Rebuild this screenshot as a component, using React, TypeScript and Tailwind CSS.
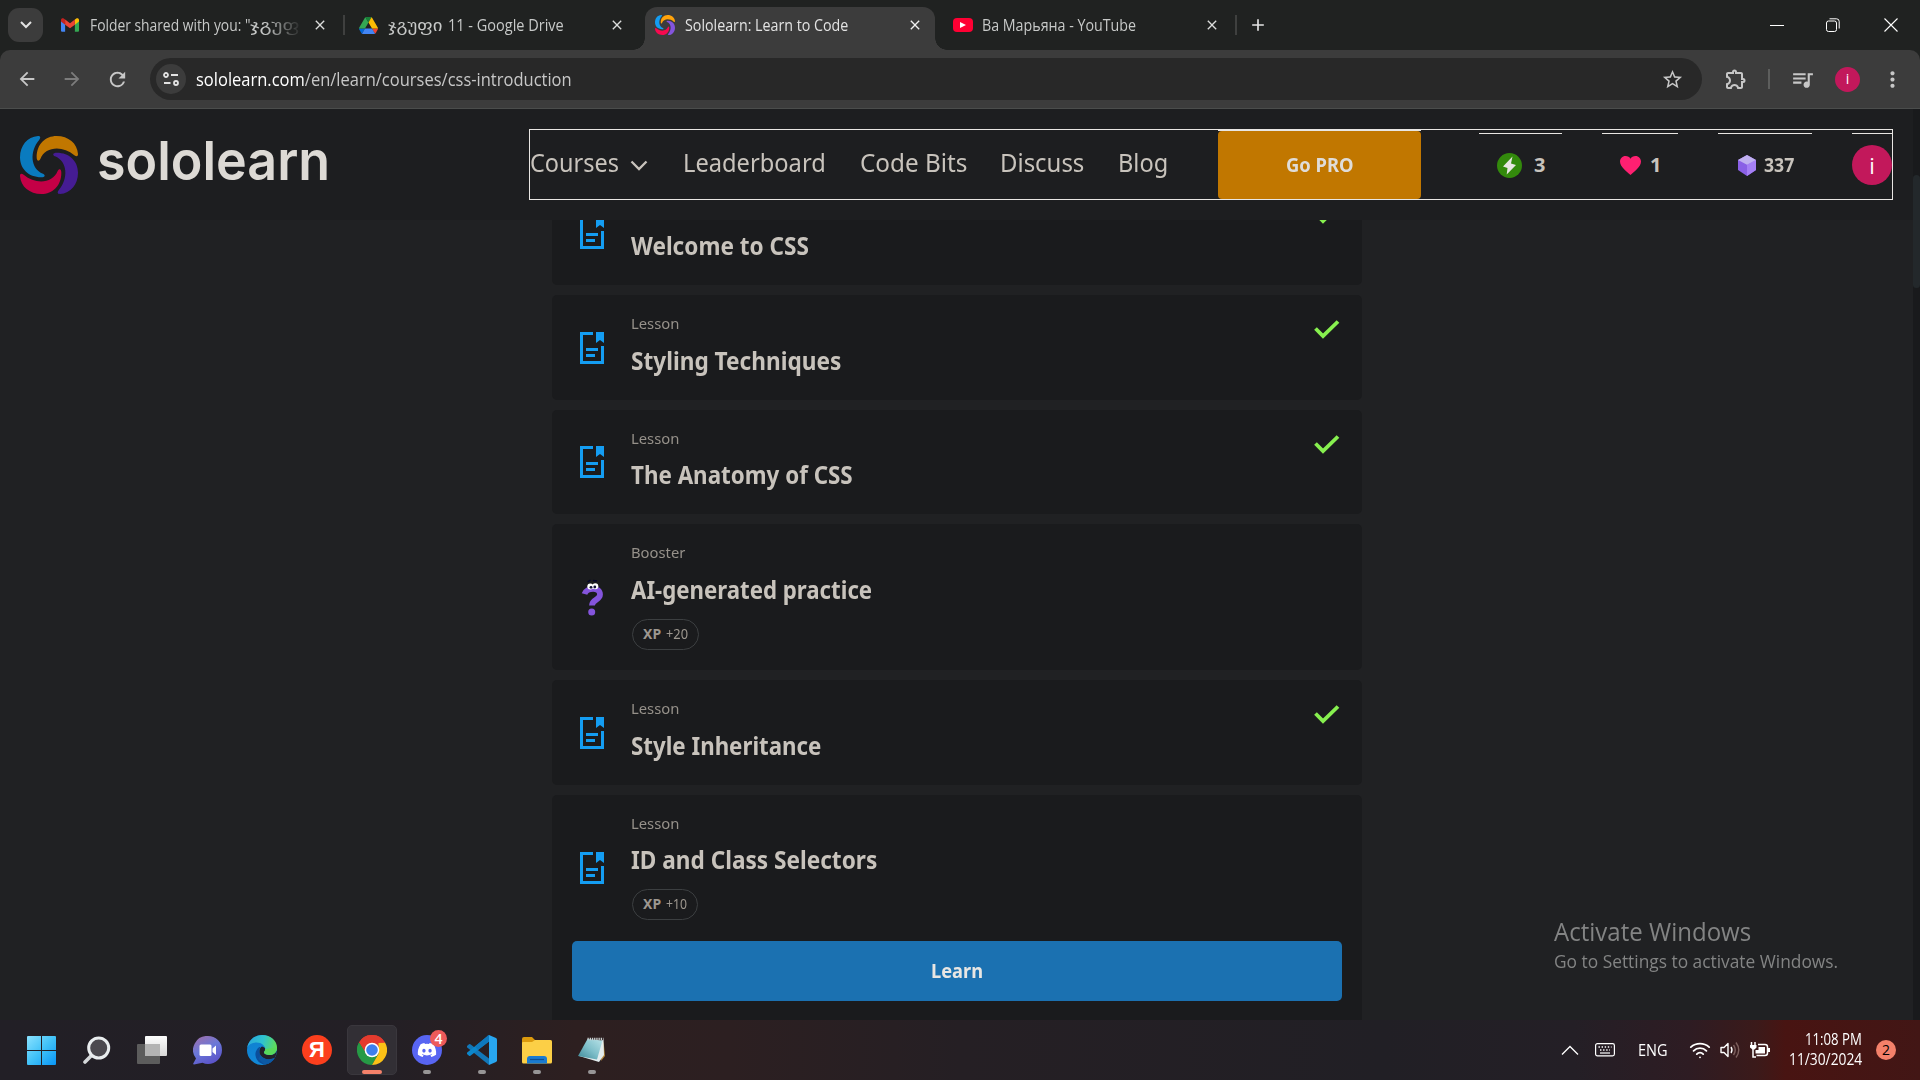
import { useLayoutEffect, useRef, useState, type ReactNode } from "react";
import {
  MdArrowBack, MdArrowForward, MdRefresh, MdStarOutline, MdOutlineExtension,
  MdQueueMusic, MdMoreVert, MdClose, MdAdd,
} from "react-icons/md";
import { FaDiscord } from "react-icons/fa";
import { Wifi } from "lucide-react";

const UI = "font-['Open_Sans','DejaVu_Sans',sans-serif]";
const FIRA = "font-['Noto_Sans','DejaVu_Sans',sans-serif]";

/** A single line of text condensed or widened to an exact width. */
function T({ w, className = "", children }: { w: number; className?: string; children: ReactNode }) {
  const ref = useRef<HTMLSpanElement>(null);
  const [k, setK] = useState(1);
  useLayoutEffect(() => {
    if (ref.current && ref.current.offsetWidth) {
      setK(w / ref.current.offsetWidth);
    }
  }, [w]);
  return (
    <span className={`block shrink-0 ${className}`} style={{ width: w }}>
      <span ref={ref} className="inline-block origin-left whitespace-nowrap align-top" style={{ transform: `scaleX(${k})` }}>
        {children}
      </span>
    </span>
  );
}

function SoloMark({ className, colors }: { className: string; colors: string[] }) {
  const d = "M110 0C76 0 50 25 50 64C50 76 57 77 61 69C76 31 128 28 163 58C170 63 174 61 174 54C172 22 145 0 110 0Z";
  return (
    <svg viewBox="0 0 174 174" className={className}>
      {colors.map((c, i) => (
        <path key={c} d={d} fill={c} transform={`rotate(${i * 90} 87 87)`} />
      ))}
    </svg>
  );
}

function TabStrip() {
  return (
    <div className={`flex h-[50px] bg-[#202221] text-[16px] leading-[20px] text-[#c7c9c8] ${UI}`}>
      <div className="ml-[8px] mt-[8px] flex h-[34px] w-[35px] items-center justify-center rounded-[11px] bg-[#3c3c3c]">
        <svg viewBox="0 0 12 8" className="h-[8px] w-[12px]"><path d="M1 1l5 5 5-5" fill="none" stroke="#e3e3e3" strokeWidth="2" /></svg>
      </div>
      <div className="ml-[18px] flex h-[50px] w-[284px] items-center">
        <svg viewBox="0 0 24 18" className="h-[14px] w-[18px] shrink-0">
          <path d="M0 3v13.500q0 1.500 1.500 1.500H5.500V8z" fill="#4285f4" />
          <path d="M24 3v13.500q0 1.500-1.500 1.500H18.500V8z" fill="#34a853" />
          <path d="M18.500 1.600V8.500L24 4.200V2.200C24 0 21.600-.8 20 .5z" fill="#fbbc04" />
          <path d="M5.500 1.600V8.500L0 4.200V2.200C0 0 2.400-.8 4 .5z" fill="#c5221f" />
          <path d="M5.500 8.500V1.600L12 6.500l6.500-4.900v6.900L12 13.300z" fill="#ea4335" />
        </svg>
        <div className="ml-[11px] flex w-[210px] overflow-hidden [mask-image:linear-gradient(to_right,#000_175px,transparent_212px)]">
          <T w={160}>Folder shared with you: "</T>
          <T w={60}>ჯგუფი</T>
        </div>
        <MdClose className="ml-[13px] size-[16px] shrink-0 text-[#dcdddc]" />
        <div className="ml-[15px] h-[20px] w-[2px] shrink-0 bg-[#3f403f]" />
      </div>
      <div className="ml-[14px] flex h-[50px] w-[286px] items-center">
        <svg viewBox="0 0 87.300 78" className="h-[17px] w-[19px] shrink-0">
          <path d="M6.600 66.850l3.850 6.650c.8 1.400 1.950 2.500 3.300 3.300L27.500 53H0c0 1.550.4 3.100 1.200 4.500z" fill="#0066da" />
          <path d="M43.650 25L29.900 1.200c-1.350.8-2.500 1.900-3.300 3.300l-25.400 44A9 9 0 000 53h27.500z" fill="#34a853" />
          <path d="M73.550 76.800c1.350-.8 2.500-1.900 3.300-3.300l1.600-2.750L86.100 57.500c.8-1.400 1.200-2.950 1.200-4.500H59.800l5.850 11.500z" fill="#ea4335" />
          <path d="M43.650 25L57.400 1.200C56.050.4 54.500 0 52.900 0H34.400c-1.600 0-3.150.45-4.500 1.200z" fill="#188038" />
          <path d="M59.800 53H27.500L13.750 76.800c1.350.8 2.900 1.200 4.500 1.200h50.800c1.600 0 3.150-.45 4.500-1.200z" fill="#4285f4" />
          <path d="M73.400 26.500l-12.700-22c-.8-1.400-1.950-2.500-3.300-3.300L43.650 25 59.800 53h27.450c0-1.550-.4-3.100-1.200-4.500z" fill="#fbbc04" />
        </svg>
        <T w={54} className="ml-[10px]">ჯგუფი</T>
        <T w={116} className="ml-[6px]">11 - Google Drive</T>
        <MdClose className="ml-[45px] size-[16px] shrink-0 text-[#dcdddc]" />
      </div>
      <div className="relative mt-[7px] flex h-[43px] w-[290px] items-center rounded-t-[12px] bg-[#3c3c3c] pb-[7px] pl-[10px] text-[#e3e3e3]">
        <div className="absolute bottom-0 left-[-12px] size-[12px] bg-[radial-gradient(circle_at_0_0,transparent_11.500px,#3c3c3c_12px)]" />
        <div className="absolute bottom-0 right-[-12px] size-[12px] bg-[radial-gradient(circle_at_100%_0,transparent_11.500px,#3c3c3c_12px)]" />
        <SoloMark className="size-[20px] shrink-0" colors={["#ffa30b", "#8454dc", "#f7094f", "#149df2"]} />
        <T w={163} className="ml-[10px]">Sololearn: Learn to Code</T>
        <MdClose className="ml-[59px] size-[16px] shrink-0 text-[#f0f0f0]" />
      </div>
      <div className="flex h-[50px] items-center">
        <div className="ml-[18px] flex h-[14px] w-[20px] items-center justify-center rounded-[4px] bg-[#ff0033]">
          <svg viewBox="0 0 6 6" className="size-[6px]"><path d="M0 0l6 3-6 3z" fill="#fff" /></svg>
        </div>
        <T w={154} className="ml-[9px]">Ва Марьяна - YouTube</T>
        <MdClose className="ml-[68px] size-[16px] shrink-0 text-[#dcdddc]" />
        <div className="ml-[15px] h-[20px] w-[2px] bg-[#3f403f]" />
        <MdAdd className="ml-[11px] size-[20px] text-[#e3e3e3]" />
      </div>
      <div className="ml-auto mr-[22px] flex h-[50px] items-center">
        <svg viewBox="0 0 14 14" className="size-[14px]"><path d="M0 7.500h14" stroke="#fff" /></svg>
        <svg viewBox="0 0 14 14" className="ml-[42px] size-[14px]">
          <rect x=".5" y="3" width="10" height="10.500" rx="2" fill="none" stroke="#fff" />
          <path d="M3.500 .8h7q2.700 0 2.700 2.700v7" fill="none" stroke="#fff" />
        </svg>
        <svg viewBox="0 0 14 14" className="ml-[44px] size-[14px]"><path d="M.5.5l13 13M13.500.5l-13 13" stroke="#fff" strokeWidth="1.100" /></svg>
      </div>
    </div>
  );
}

function Toolbar() {
  return (
    <div className={`bg-[#202221] ${UI}`}>
      <div className="flex h-[59px] items-center rounded-t-[10px] border-b border-[#4b4d4c] bg-[#3c3c3c] text-[#c7c7c7]">
        <MdArrowBack className="ml-[16px] size-[22px]" />
        <MdArrowForward className="ml-[23px] size-[22px] text-[#7c7c7c]" />
        <MdRefresh className="ml-[23px] size-[23px]" />
        <div className="ml-[21px] flex h-[42px] w-[1552px] items-center rounded-full bg-[#282828]">
          <div className="ml-[6px] flex size-[30px] items-center justify-center rounded-full bg-[#3c3c3c]">
            <svg viewBox="0 0 16 14" className="h-[14px] w-[16px]" fill="none" stroke="#e3e3e3" strokeWidth="1.800">
              <circle cx="3" cy="3" r="2" /><path d="M8 3h7M1 11h6.500" /><circle cx="13" cy="11" r="2" />
            </svg>
          </div>
          <T w={376} className="ml-[10px] text-[18px] leading-[24px] text-[#c7c7c7]">
            <span className="text-white">sololearn.com</span>/en/learn/courses/css-introduction
          </T>
          <MdStarOutline className="ml-auto mr-[18px] size-[23px]" />
        </div>
        <MdOutlineExtension className="ml-[22px] size-[24px]" />
        <div className="ml-[20px] h-[20px] w-[2px] bg-[#5d5e5d]" />
        <MdQueueMusic className="ml-[20px] size-[25px]" />
        <div className="ml-[20px] flex size-[25px] items-center justify-center rounded-full bg-[#c2185b] text-[14px] leading-none text-white">i</div>
        <MdMoreVert className="ml-[20px] size-[25px]" />
      </div>
    </div>
  );
}

function Header() {
  return (
    <div className={`flex h-[111px] bg-[#1d1e20] ${FIRA}`}>
      <SoloMark className="ml-[20px] mt-[27px] size-[58px] shrink-0" colors={["#c17700", "#451c93", "#c40046", "#0a7bbf"]} />
      <T w={233} className="ml-[19px] mt-[18px] font-['Inter',sans-serif] text-[54px] font-semibold leading-[68px] text-[#dddad5]">sololearn</T>
      <div className="ml-[199px] mt-[20px] flex h-[71px] w-[1364px] border border-[#e8e6e3] text-[24.500px] leading-[30px] text-[#c8c3bc]">
        <T w={89} className="mt-[18px]">Courses</T>
        <svg viewBox="0 0 18 11" className="ml-[11px] mt-[30px] h-[11px] w-[18px]"><path d="M1.500 1.500l7.500 7.500 7.500-7.500" fill="none" stroke="#c8c3bc" strokeWidth="2.300" /></svg>
        <T w={143} className="ml-[35px] mt-[18px]">Leaderboard</T>
        <T w={107} className="ml-[34px] mt-[18px]">Code Bits</T>
        <T w={84} className="ml-[33px] mt-[18px]">Discuss</T>
        <T w={50} className="ml-[34px] mt-[18px]">Blog</T>
        <div className="ml-[50px] h-[69px] w-[203px] border-t border-[#e8e6e3]">
          <div className="flex h-[68px] justify-center rounded-[4px] bg-[#c17700] pt-[20px] text-[20px] font-bold leading-[28px] text-[#dfdcd8]">
            <T w={68}>Go PRO</T>
          </div>
        </div>
        <div className="ml-[58px] mt-[3px] flex h-[63px] w-[83px] items-center border-t border-[#e8e6e3] pl-[18px] text-[20px] font-bold">
          <svg viewBox="0 0 25 25" className="size-[25px]"><circle cx="12.500" cy="12.500" r="12.500" fill="#338a0c" /><path d="M15.500 3.500L6 13.500l4.500 1.500-.8 6.500 9.300-9.500-5-1.500z" fill="#e8e6e3" /></svg>
          <T w={11} className="ml-[12px]">3</T>
        </div>
        <div className="ml-[40px] mt-[3px] flex h-[63px] w-[76px] items-center border-t border-[#e8e6e3] pl-[18px] text-[20px] font-bold">
          <svg viewBox="0 0 21 19" className="h-[19px] w-[21px]"><path d="M10.500 19C7 15.500 0 11 0 5.500C0 2.500 2.300 0 5.500 0C7.800 0 9.500 1 10.500 2.700C11.500 1 13.200 0 15.500 0C18.700 0 21 2.500 21 5.500C21 11 14 15.500 10.500 19Z" fill="#ff2071" /></svg>
          <T w={11} className="ml-[9px]">1</T>
        </div>
        <div className="ml-[40px] mt-[3px] flex h-[63px] w-[94px] items-center border-t border-[#e8e6e3] pl-[20px] text-[20px] font-bold">
          <svg viewBox="0 0 18 21" className="h-[21px] w-[18px]"><path d="M9 0l9 5v10l-9 6-9-6V5z" fill="#8a60e6" /><path d="M9 9.800L18 5v10l-9 6z" fill="#a57ff5" /><path d="M9 0l9 5-9 4.800L0 5z" fill="#c0b0f0" /></svg>
          <T w={30} className="ml-[8px]">337</T>
        </div>
        <div className="ml-auto mt-[3px] flex h-[63px] w-[40px] items-center border-t border-[#e8e6e3]">
          <div className={`flex size-[40px] items-center justify-center rounded-full bg-[#c2185b] text-[22px] leading-none text-white ${UI}`}>i</div>
        </div>
      </div>
    </div>
  );
}

function LessonIcon() {
  return (
    <svg viewBox="0 0 24 32" className="h-[32px] w-[24px]" fill="#149df2">
      <path d="M0 0h13v3H3v26h18V14h3v18H0z" />
      <path d="M16 0h8v11l-4-3-4 3z" />
      <path d="M6 16h12v3H6zM6 22h9v3H6z" />
    </svg>
  );
}

function BoosterIcon() {
  return (
    <svg viewBox="0 0 24 37" className="h-[37px] w-[24px]">
      <path d="M4.500 15C6.500 8.500 20 7.500 20 15.500C20 21 12 20.500 12 26.500" fill="none" stroke="#8454dc" strokeWidth="5.800" />
      <circle cx="11.700" cy="33" r="3.500" fill="#8454dc" />
      <path d="M7.500 3l3-2M13 1.500l4 .5" stroke="#05052a" strokeWidth="1.500" />
      <circle cx="10.300" cy="7.500" r="3" fill="#fff" /><circle cx="15.300" cy="7.300" r="3" fill="#fff" />
      <circle cx="11" cy="8.300" r="1.400" fill="#111133" /><circle cx="14.800" cy="8" r="1.400" fill="#111133" />
    </svg>
  );
}

type CardProps = {
  kind?: string; kindW?: number; kindClass?: string; title: string; w: number; done?: boolean; xp?: string; xpW?: number;
  size: string; iconPad: string; lead: string; learn?: boolean;
};

const CARDS: CardProps[] = [
  { title: "Welcome to CSS", kindClass: "invisible", w: 178, done: true, size: "h-[105px]", iconPad: "pt-[37px]", lead: "mt-[12px]" },
  { title: "Styling Techniques", w: 210, done: true, size: "h-[105px]", iconPad: "pt-[37px]", lead: "mt-[12px]" },
  { title: "The Anatomy of CSS", w: 222, done: true, size: "h-[104px]", iconPad: "pt-[36px]", lead: "mt-[11px]" },
  { kind: "Booster", kindW: 54, title: "AI-generated practice", w: 241, xp: "+20", xpW: 22, size: "h-[146px]", iconPad: "pt-[55px]", lead: "mt-[12px]" },
  { title: "Style Inheritance", w: 190, done: true, size: "h-[105px]", iconPad: "pt-[37px]", lead: "mt-[12px]" },
  { title: "ID and Class Selectors", w: 246, xp: "+10", xpW: 21, size: "h-[240px]", iconPad: "pt-[57px]", lead: "mt-[11px]", learn: true },
];

function Card({ kind = "Lesson", kindW = 48, kindClass = "", title, w, done, xp, xpW = 0, size, iconPad, lead, learn }: CardProps) {
  return (
    <div className={`w-[810px] shrink-0 rounded-[5px] bg-[#1a1b1d] ${size}`}>
      <div className="flex">
        <div className={`ml-[28px] w-[24px] ${iconPad}`}>{kind === "Lesson" ? <LessonIcon /> : <BoosterIcon />}</div>
        <div className="ml-[27px] pt-[20px]">
          <T w={kindW} className={`text-[14.500px] leading-[17px] text-[#96918a] ${kindClass}`}>{kind}</T>
          <T w={w} className={`text-[25px] font-bold leading-[33px] text-[#c8c3bc] ${lead}`}>{title}</T>
          {xp && (
            <div className="ml-[1px] mt-[13px] inline-flex h-[31px] items-center rounded-full border border-[#3c3f41] px-[10px] pb-[2px] text-[14px] leading-[20px] text-[#9d978f]">
              <T w={18} className="font-bold">XP</T>
              <T w={xpW} className="ml-[5px]">{xp}</T>
            </div>
          )}
        </div>
        {done && (
          <svg viewBox="0 0 26 20" className="ml-auto mr-[22px] mt-[25px] h-[20px] w-[26px]"><path d="M1.500 8.500l7.500 7.500L24 1.500" fill="none" stroke="#87f04f" strokeWidth="3.800" /></svg>
        )}
      </div>
      {learn && (
        <div className="mx-[20px] mt-[21px] flex h-[60px] justify-center rounded-[5px] bg-[#1b71b1] pt-[16px] text-[20px] font-bold leading-[28px] text-[#e8e6e3]">
          <T w={52}>Learn</T>
        </div>
      )}
    </div>
  );
}

function Content() {
  return (
    <div className={`relative flex h-[800px] flex-col items-center overflow-hidden bg-[#202123] pr-[6px] ${FIRA}`}>
      <div className="-mt-[40px] flex flex-col gap-[10px]">
        {CARDS.map((c) => <Card key={c.title} {...c} />)}
      </div>
      <div className={`absolute left-[1554px] top-[694px] text-[#838484] ${UI}`}>
        <T w={197} className="text-[25px] leading-[34px]">Activate Windows</T>
        <T w={284} className="text-[18.500px] leading-[25px]">Go to Settings to activate Windows.</T>
      </div>
    </div>
  );
}

function TaskIcon({ children, dot, gap = "ml-[15px]" }: { children: ReactNode; dot?: boolean; gap?: string }) {
  return (
    <div className={`flex h-[60px] w-[40px] flex-col items-center pt-[15px] ${gap}`}>
      <div className="flex h-[30px] items-center">{children}</div>
      {dot && <div className="mt-[5px] h-[4px] w-[8px] shrink-0 rounded-full bg-[#979596]" />}
    </div>
  );
}

function Taskbar() {
  return (
    <div className={`flex h-[60px] bg-[linear-gradient(90deg,#221f26_0%,#231f25_20%,#2d1f20_30%,#2c1f21_38%,#251f24_50%,#211f25_72%,#241f26_82%,#2e1c23_88%,#3b1a1a_91.500%,#481412_93%,#421615_100%)] ${UI}`}>
      <TaskIcon gap="ml-[21px]">
        <svg viewBox="0 0 29 29" className="size-[29px]">
          <defs><linearGradient id="win" x1="0" y1="0" x2="1" y2="1"><stop offset="0" stopColor="#8be2ff" /><stop offset=".5" stopColor="#41c2f8" /><stop offset="1" stopColor="#0895f6" /></linearGradient></defs>
          <path d="M1 0h13v14H0V1q0-1 1-1zM15 0h13q1 0 1 1v13H15zM0 15h14v14H1q-1 0-1-1zM15 15h14v13q0 1-1 1H15z" fill="url(#win)" />
        </svg>
      </TaskIcon>
      <TaskIcon gap="ml-[16px]">
        <svg viewBox="0 0 28 28" className="size-[28px]"><path d="M8.500 19.500L2 26" stroke="#d5d8da" strokeWidth="3.600" strokeLinecap="round" /><circle cx="15.700" cy="12" r="10" fill="#4b494f" stroke="#e9edef" strokeWidth="3" /></svg>
      </TaskIcon>
      <TaskIcon>
        <svg viewBox="0 0 30 28" className="h-[28px] w-[30px]">
          <defs><linearGradient id="tv" x1="0" y1="0" x2="0" y2="1"><stop offset="0" stopColor="#fdfdfd" /><stop offset="1" stopColor="#d8d8d8" /></linearGradient></defs>
          <rect x="8" y="0" width="22" height="20" rx="1" fill="url(#tv)" /><rect x="0" y="8" width="23" height="20" rx="1" fill="#5c5c5c" /><rect x="8" y="8" width="15" height="12" fill="#b3b3b3" />
        </svg>
      </TaskIcon>
      <TaskIcon>
        <svg viewBox="0 0 29 29" className="size-[29px]">
          <defs><linearGradient id="tm" x1=".2" y1="0" x2=".7" y2="1"><stop offset="0" stopColor="#9b6fae" /><stop offset=".45" stopColor="#6a78d8" /><stop offset="1" stopColor="#5a50c8" /></linearGradient></defs>
          <path d="M15 0a14 14 0 110 28q-3 0-5.500-1.200L1 28.500Q-.5 28 .8 26.500L3 22.500A14 14 0 0115 0z" fill="url(#tm)" />
          <rect x="6.500" y="8.500" width="12" height="11.500" rx="1.500" fill="#fff" /><path d="M19.500 12.500l3.500-3v9.500l-3.500-3z" fill="#fff" />
        </svg>
      </TaskIcon>
      <TaskIcon>
        <svg viewBox="0 0 30 30" className="size-[30px]">
          <defs>
            <linearGradient id="e1" x1="0" y1=".3" x2="1" y2=".5"><stop offset="0" stopColor="#2aa7dc" /><stop offset=".5" stopColor="#2fc3cf" /><stop offset="1" stopColor="#62dd52" /></linearGradient>
            <linearGradient id="e2" x1="0" y1="0" x2=".5" y2="1"><stop offset="0" stopColor="#0f7fd0" /><stop offset="1" stopColor="#1189d8" /></linearGradient>
          </defs>
          <circle cx="15" cy="15" r="15" fill="url(#e2)" />
          <path d="M.2 12.500C2 5 8 0 15 0c9 0 15 6 15 12.500 0 5-3.500 7.500-7.500 7.500-3 0-5.500-1-5.500-2.500 0-1 1.200-1.500 1.200-3.500C18.200 11 15 7.500 9.500 7.500 5 7.500 1.500 9.500.2 12.500z" fill="url(#e1)" />
          <path d="M13.500 11.500c-3 1-5.500 5-5 9 .6 5 5 9 10 9.100 4-.8 7.500-3.400 9.300-6.600-7 3.500-14.500 0-15.300-5.500-.3-2.500.3-4.500 1-6z" fill="#0b4f9c" />
          <path d="M17 17.500c0 1.500 2.500 2.500 5.500 2.500 4 0 7-2 7.500-5.500q0 5-2.200 8.500c-7 3.500-14.500 0-15.300-5.500-.3-3 1-5.500 2.500-6 2 .4 3.200 1.500 3.200 2.500 0 2-1.200 2.500-1.200 3.500z" fill="#22212a" />
          <path d="M27.800 22.500c-5.500 3.200-12 1.500-14.300-2.500l-2 4 6 5.500c4-.4 8-3 10.300-7z" fill="#0c59a4" />
          <path d="M30 12.500c0 5-3.500 7.500-7.500 7.500-3 0-5.500-1-5.500-2.500 0-1 1.200-1.500 1.200-3.500z" fill="#58d95c" />
        </svg>
      </TaskIcon>
      <TaskIcon>
        <div className="flex size-[30px] items-center justify-center rounded-full bg-[#fc3f1d] font-['Liberation_Sans',sans-serif] text-[22px] font-bold leading-none text-white">Я</div>
      </TaskIcon>
      <div className="ml-[10px] mt-[5px] flex h-[50px] w-[50px] flex-col items-center rounded-[5px] border border-[#3a373d] bg-[#322f35] pt-[9px]">
        <svg viewBox="0 0 30 30" className="size-[30px] shrink-0">
          <path d="M15 15L2 7.500A15 15 0 0128 7.500z" fill="#e33b2e" />
          <path d="M2 7.500A15 15 0 0015 30l6.500-11.300L8.500 18.700z" fill="#269a45" />
          <path d="M28 7.500A15 15 0 0115 30l6.500-11.300V7.500z" fill="#fbc116" />
          <path d="M2 7.500L8.500 18.700 15 8.500 28 7.500A15 15 0 002 7.500z" fill="#e33b2e" />
          <path d="M2 7.500A15 15 0 000 15l8 4 1-1z" fill="#269a45" />
          <circle cx="15" cy="15" r="7.300" fill="#fff" /><circle cx="15" cy="15" r="5.800" fill="#3d7fee" />
        </svg>
        <div className="mt-[5px] h-[4px] w-[20px] shrink-0 rounded-full bg-[#f4816a]" />
      </div>
      <TaskIcon dot gap="ml-[10px]">
        <div className="relative flex size-[30px] items-center justify-center rounded-full bg-[#5865f2]">
          <FaDiscord className="size-[20px] text-white" />
          <div className="absolute left-[18px] top-[-5px] flex size-[17px] items-center justify-center rounded-full bg-[#ed5a5a] text-[14px] font-semibold leading-none text-white">4</div>
        </div>
      </TaskIcon>
      <TaskIcon dot>
        <svg viewBox="0 0 30 30" className="size-[30px]">
          <path d="M0 11l2-1.700q.7-.5 1.400 0L22 23.500V30L.2 12.500Q-.5 11.700 0 11z" fill="#1277b8" />
          <path d="M0 19l2 1.700q.7.500 1.400 0L22 6.500V0L.2 17.500Q-.5 18.300 0 19z" fill="#0c87cc" />
          <path d="M22 0l7 3q1 .6 1 1.700v20.600q0 1.100-1 1.700l-7 3z" fill="#28a6f0" />
          <path d="M22 0v6.500L11 15l-3-3.500L21 .5z" fill="#0e78bd" />
        </svg>
      </TaskIcon>
      <TaskIcon dot>
        <svg viewBox="0 0 30 27" className="h-[27px] w-[30px]">
          <path d="M0 2q0-2 2-2h8l3 3h15q2 0 2 2v5H0z" fill="#dc9a0d" />
          <path d="M0 6q0-1 1-1h9l3-2h15q2 0 2 2v20q0 1.500-1.500 1.500h-27Q0 26.500 0 25z" fill="#fccf46" />
          <path d="M5 26.500V22q0-3 3-3h14q3 0 3 3v4.500z" fill="#1a7bd0" /><path d="M8 22.500h14" stroke="#0d4f93" strokeWidth="1.200" />
        </svg>
      </TaskIcon>
      <TaskIcon dot>
        <svg viewBox="0 0 28 28" className="size-[28px]">
          <defs><linearGradient id="np" x1="1" y1="0" x2="0" y2="1"><stop offset="0" stopColor="#b9e3e8" /><stop offset=".5" stopColor="#7fbfca" /><stop offset="1" stopColor="#3c8796" /></linearGradient></defs>
          <path d="M25.500 5l1.500 15-4 5z" fill="#b58a3c" />
          <path d="M25.500 3.500L26 19l-5 7L1 20z" fill="#e3ecee" />
          <path d="M9.500 3l15 1.500L19 23.500 0 20z" fill="url(#np)" />
          <path d="M9.500 3h16" stroke="#c9d0d1" strokeWidth="2.500" strokeDasharray="1.300 .9" />
        </svg>
      </TaskIcon>
      <div className="ml-auto mr-[24px] flex items-center text-white">
        <svg viewBox="0 0 18 10" className="h-[10px] w-[18px]"><path d="M1 9.500L9 1.500l8 8" fill="none" stroke="#fff" strokeWidth="1.300" /></svg>
        <svg viewBox="0 0 20 14" className="ml-[16px] h-[14px] w-[20px]" fill="none" stroke="#fff">
          <rect x=".6" y=".6" width="18.800" height="12.300" rx="1.800" strokeWidth="1.200" />
          <path d="M3.500 4h13" strokeWidth="1.400" strokeDasharray="1.400 1.700" /><path d="M5 7h10" strokeWidth="1.400" strokeDasharray="1.400 1.700" /><path d="M5 10h10" strokeWidth="1.200" />
        </svg>
        <T w={30} className="ml-[23px] text-[15.500px] leading-[20px]">ENG</T>
        <Wifi className="ml-[21px] size-[22px]" strokeWidth={2} />
        <svg viewBox="0 0 21 18" className="ml-[9px] h-[18px] w-[21px]" fill="none" stroke="#fff" strokeWidth="1.400">
          <path d="M1 6.500h3l4-4v13l-4-4H1z" strokeLinejoin="round" /><path d="M11 6q2 3 0 6" />
          <path d="M13.500 4q3.500 5 0 10M16 1.500q5.500 7.500 0 15" stroke="#7d5f5d" />
        </svg>
        <svg viewBox="0 0 20 16" className="ml-[9px] h-[16px] w-[20px]" fill="none" stroke="#fff">
          <path d="M8 2.500h7q2.500 0 2.500 2.500v6q0 2.500-2.500 2.500H6.500" strokeWidth="1.500" /><path d="M8.500 5h6.500v6.500H5.500V8h3z" fill="#fff" stroke="none" />
          <path d="M1.500 0v3M5 0v3M3 6v9h3" strokeWidth="1.500" /><path d="M0 3h6.500v2.500L4.500 7.500h-2L0 5.500z" fill="#fff" stroke="none" /><path d="M19 6v4" strokeWidth="2" />
        </svg>
        <div className="ml-[19px] flex flex-col items-end pb-[2px] text-[15.500px] leading-[20px]">
          <T w={57}>11:08 PM</T>
          <T w={73}>11/30/2024</T>
        </div>
        <div className="ml-[14px] flex size-[20px] items-center justify-center rounded-full bg-[#f4816a] text-[14px] leading-none text-black">2</div>
      </div>
    </div>
  );
}

export default function App() {
  return (
    <div className="h-[1080px] w-[1920px] overflow-hidden bg-[#202123]">
      <TabStrip />
      <Toolbar />
      <div className="relative">
        <Header />
        <Content />
        <div className="absolute right-0 top-0 h-full w-[7px] bg-[#191a1c]">
          <div className="mt-[66px] h-[113px] rounded-full bg-[#23282b]" />
        </div>
      </div>
      <Taskbar />
    </div>
  );
}
